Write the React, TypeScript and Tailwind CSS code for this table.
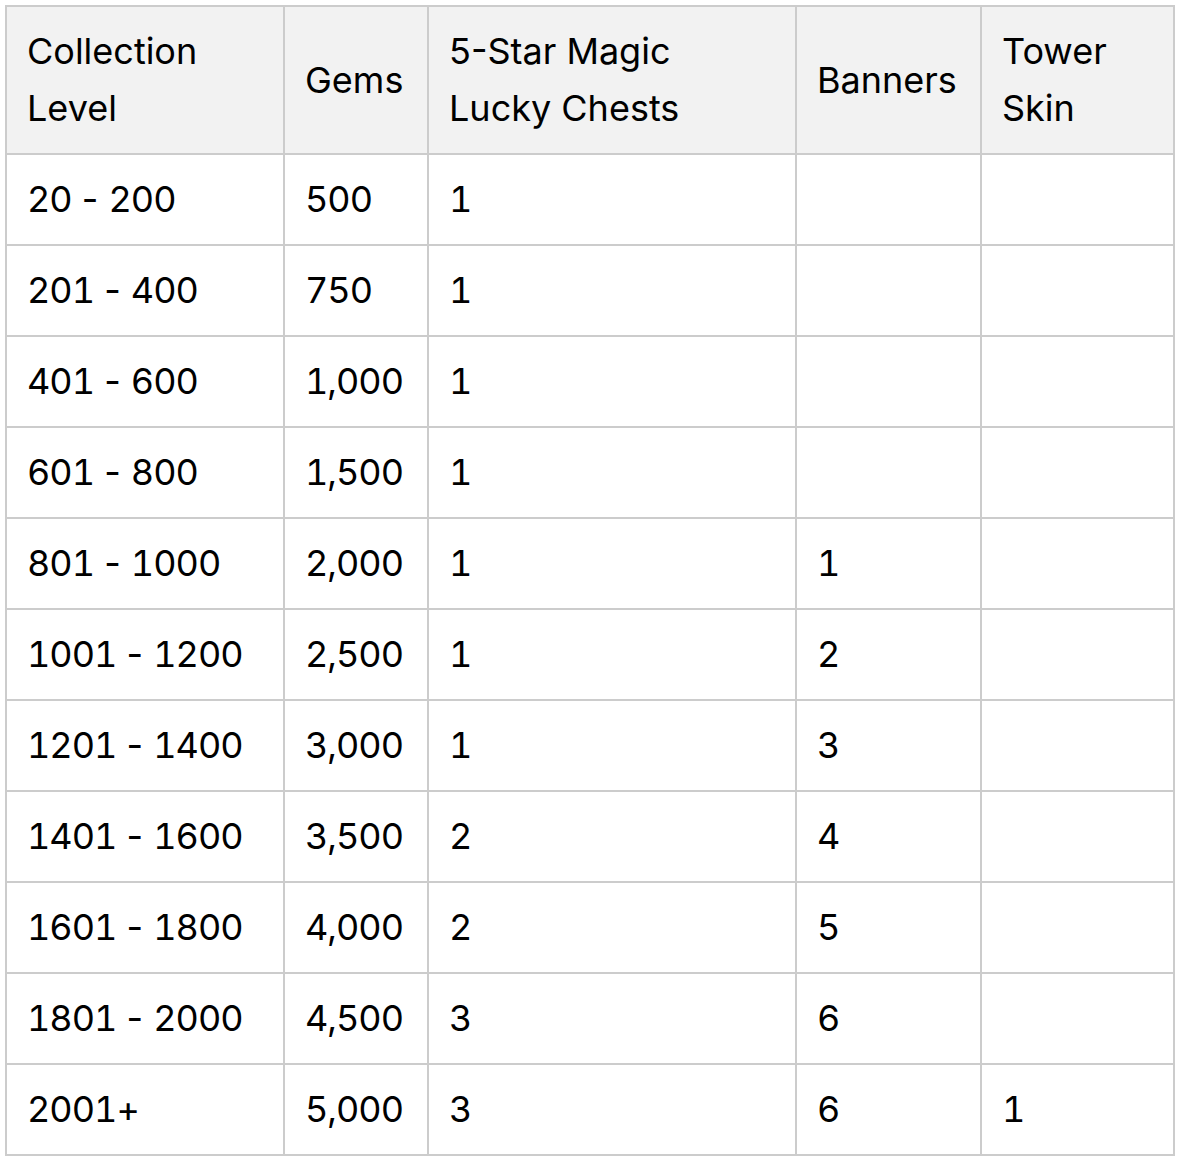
import React from 'react';

interface RewardRow {
  level: string;
  gems: string;
  chests: string;
  banners?: string;
  skin?: string;
}

const rows: RewardRow[] = [
  { level: '20 - 200', gems: '500', chests: '1' },
  { level: '201 - 400', gems: '750', chests: '1' },
  { level: '401 - 600', gems: '1,000', chests: '1' },
  { level: '601 - 800', gems: '1,500', chests: '1' },
  { level: '801 - 1000', gems: '2,000', chests: '1', banners: '1' },
  { level: '1001 - 1200', gems: '2,500', chests: '1', banners: '2' },
  { level: '1201 - 1400', gems: '3,000', chests: '1', banners: '3' },
  { level: '1401 - 1600', gems: '3,500', chests: '2', banners: '4' },
  { level: '1601 - 1800', gems: '4,000', chests: '2', banners: '5' },
  { level: '1801 - 2000', gems: '4,500', chests: '3', banners: '6' },
  { level: '2001+', gems: '5,000', chests: '3', banners: '6', skin: '1' },
];

const cell = 'border-2 border-[#cccccc] px-5 py-4 text-left align-middle';
const num = 'tabular-nums tracking-[-1px]';

// digits are tabular in the source, but the dash and spaces stay proportional
const Level: React.FC<{ value: string }> = ({ value }) => {
  const parts = value.split(' - ');
  if (parts.length < 2) return <span className={num}>{value}</span>;
  return (
    <>
      <span className={num}>{parts[0]}</span> - <span className={num}>{parts[1]}</span>
    </>
  );
};

const App: React.FC = () => {
  return (
    <div className="bg-white p-[5px] font-['Inter',sans-serif] text-[36px] leading-[57px] text-black">
      <table className="w-[1168px] table-fixed border-collapse">
        <colgroup>
          <col className="w-[278px]" />
          <col className="w-[144px]" />
          <col className="w-[368px]" />
          <col className="w-[185px]" />
          <col className="w-[193px]" />
        </colgroup>
        <thead>
          <tr className="bg-[#f2f2f2]">
            <th className={`${cell} font-normal`}>Collection Level</th>
            <th className={`${cell} font-normal`}>Gems</th>
            <th className={`${cell} font-normal`}>5-Star Magic Lucky Chests</th>
            <th className={`${cell} font-normal`}>Banners</th>
            <th className={`${cell} font-normal`}>Tower Skin</th>
          </tr>
        </thead>
        <tbody>
          {rows.map((row) => (
            <tr key={row.level}>
              <td className={cell}>
                <Level value={row.level} />
              </td>
              <td className={`${cell} ${num}`}>{row.gems}</td>
              <td className={`${cell} ${num}`}>{row.chests}</td>
              <td className={`${cell} ${num}`}>{row.banners ?? ''}</td>
              <td className={`${cell} ${num}`}>{row.skin ?? ''}</td>
            </tr>
          ))}
        </tbody>
      </table>
    </div>
  );
};

export default App;
